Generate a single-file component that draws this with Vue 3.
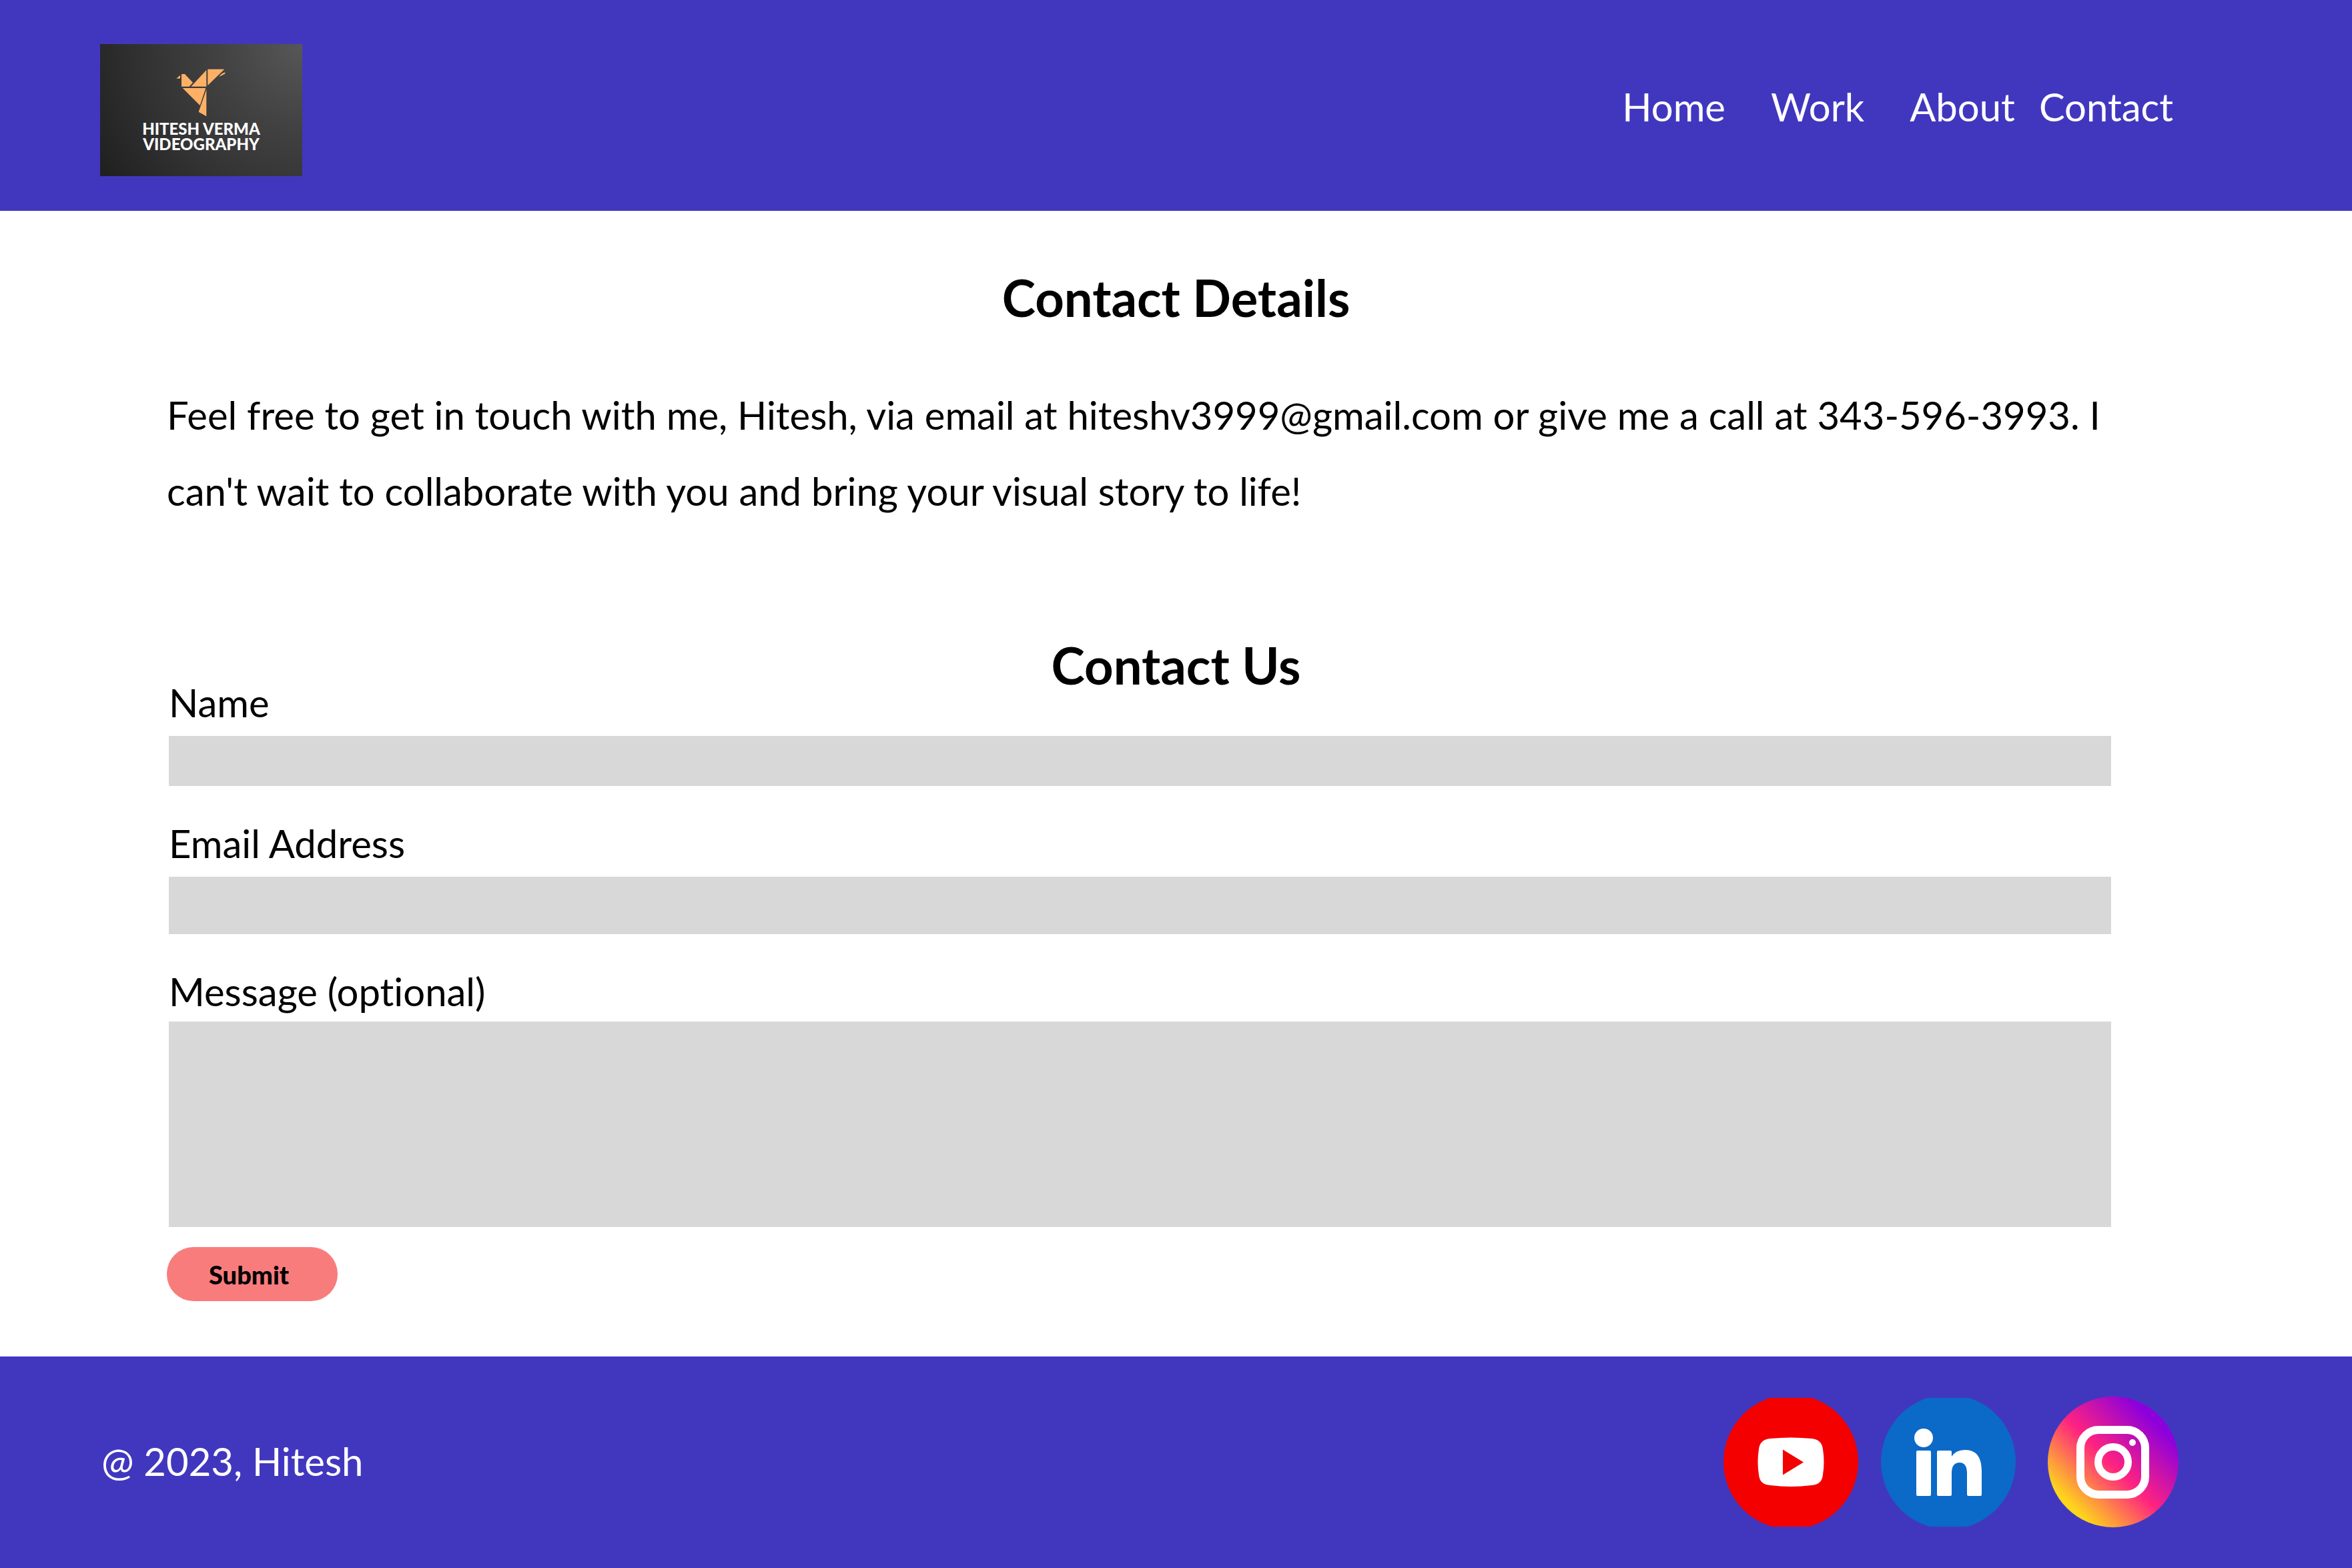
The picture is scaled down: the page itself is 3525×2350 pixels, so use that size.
<script setup>
import { ref } from 'vue'

const links = [
  { label: 'Home', href: '#home', wide: true },
  { label: 'Work', href: '#work', wide: true },
  { label: 'About', href: '#about', wide: false },
  { label: 'Contact', href: '#contact', wide: false },
]

const name = ref('')
const email = ref('')
const message = ref('')
</script>

<template>
  <div class="page">
    <header class="header">
      <a class="logo" href="#home">
        <svg class="bird" viewBox="400 155 231 222" aria-hidden="true">
          <g fill="#feb166">
            <path d="M404 202 421 187V202Z" />
            <path d="M427 182H442L478 220 462 238H427Z" />
            <path d="M470 238 539 164V238Z" />
            <path d="M545 160H620L545 233Z" />
            <path d="M596 194Q606 178 624 174L622 181Z" />
            <path d="M432 245H536L510 323Z" />
            <path d="M539 252V372L504 352Z" />
          </g>
        </svg>
        <span class="brand">HITESH VERMA</span>
        <span class="brand">VIDEOGRAPHY</span>
      </a>
      <nav class="nav">
        <a v-for="l in links" :key="l.label" :href="l.href" :class="{ wide: l.wide }">{{ l.label }}</a>
      </nav>
    </header>

    <main class="main">
      <h1>Contact Details</h1>
      <p class="intro">
        Feel free to get in touch with me, Hitesh, via email at hiteshv3999@gmail.com or give me a call at
        343-596-3993. I can't wait to collaborate with you and bring your visual story to life!
      </p>

      <h2>Contact Us</h2>
      <form class="form" @submit.prevent>
        <div class="field">
          <label for="name">Name</label>
          <input id="name" v-model="name" class="short" type="text" />
        </div>
        <div class="field">
          <label for="email">Email Address</label>
          <input id="email" v-model="email" type="email" />
        </div>
        <div class="field">
          <label for="message">Message (optional)</label>
          <textarea id="message" v-model="message"></textarea>
        </div>
        <button class="submit" type="submit">Submit</button>
      </form>
    </main>

    <footer class="footer">
      <p class="copyright">@ 2023, Hitesh</p>
      <div class="social">
        <a href="#youtube" aria-label="YouTube">
          <svg width="202" height="193" viewBox="0 0 202 193">
            <circle cx="101" cy="96" r="101" fill="#f40000" />
            <path
              fill="#fff"
              d="M70 61Q101 58 132 61C142 62 148 67 149 77Q152 96 149 115C148 126 142 130 132 131Q101 135 70 131C60 130 54 126 53 115Q50 96 53 77C54 67 60 62 70 61Z"
            />
            <path fill="#f40000" d="M89 77.500 120 96.500 89 115.500Z" />
          </svg>
        </a>
        <a href="#linkedin" aria-label="LinkedIn">
          <svg width="202" height="193" viewBox="0 0 202 193">
            <circle cx="101" cy="96" r="101" fill="#0b69c7" />
            <circle cx="64" cy="60" r="14" fill="#fff" />
            <rect x="53" y="79" width="22" height="68" rx="2" fill="#fff" />
            <path
              fill="#fff"
              d="M86 79H104Q106 79 106 81V88Q112 78 126 78C144 78 151 90 151 110V145Q151 147 149 147H131Q129 147 129 145V113C129 102 125 97 118 97C110 97 106 102 106 113V145Q106 147 104 147H86Q84 147 84 145V81Q84 79 86 79Z"
            />
          </svg>
        </a>
        <a class="spaced" href="#instagram" aria-label="Instagram">
          <svg width="196" height="196" viewBox="0 0 196 196">
            <defs>
              <linearGradient id="sunset" gradientUnits="userSpaceOnUse" x1="28" y1="168" x2="168" y2="28">
                <stop offset="0.040" stop-color="#fdd51b" />
                <stop offset="0.480" stop-color="#ff2380" />
                <stop offset="0.940" stop-color="#8c00dc" />
              </linearGradient>
            </defs>
            <circle cx="98" cy="98" r="98" fill="url(#sunset)" />
            <rect x="49" y="50" width="97" height="97" rx="27" fill="none" stroke="#fff" stroke-width="12" />
            <circle cx="98" cy="98" r="22.500" fill="none" stroke="#fff" stroke-width="11" />
            <circle cx="127" cy="69" r="5" fill="#fff" />
          </svg>
        </a>
      </div>
    </footer>
  </div>
</template>

<style>
body {
  margin: 0;
}
</style>

<style scoped>
.page {
  display: flex;
  flex-direction: column;
  min-height: 100vh;
  background: #fff;
  color: #000;
  font-family: Lato, "Noto Sans", sans-serif;
  font-size: 58px;
  font-variant-ligatures: none;
}

h1,
h2,
p {
  margin: 0;
}

a {
  color: inherit;
  text-decoration: none;
}

.header,
.footer {
  display: flex;
  align-items: center;
  justify-content: space-between;
  background: #4137bf;
  color: #fff;
}

.header {
  padding: 66px 268px 52px 150px;
}

.logo {
  box-sizing: border-box;
  display: flex;
  flex-direction: column;
  align-items: center;
  width: 303px;
  height: 198px;
  padding-top: 36px;
  background: radial-gradient(circle at 100% 0, #575757 0, #424142 36%, #333233 66%, #201f20 100%);
}

.bird {
  width: 77px;
  height: 74px;
  margin-bottom: 5px;
}

.brand {
  font-size: 24px;
  font-weight: 900;
  line-height: 23px;
  white-space: nowrap;
}

.nav {
  display: flex;
  gap: 36px;
  padding-bottom: 12px;
}

.nav .wide {
  padding-right: 32px;
}

.main {
  flex: 1;
  padding: 96px 361px 83px 250px;
}

h1,
h2 {
  /* balances the uneven side padding so headings sit mid-page */
  margin-right: -111px;
  font-size: 76px;
  font-weight: 700;
  line-height: 68px;
  text-align: center;
}

.intro {
  margin-top: 85px;
  line-height: 114px;
}

h2 {
  margin-top: 170px;
}

.form {
  display: flex;
  flex-direction: column;
  align-items: flex-start;
}

.field {
  box-sizing: border-box;
  display: flex;
  flex-direction: column;
  gap: 28px;
  width: 100%;
  padding-left: 3px;
}

.field + .field {
  margin-top: 64px;
}

.field:has(textarea) {
  gap: 23px;
}

label {
  line-height: 44px;
}

input,
textarea {
  box-sizing: border-box;
  width: 100%;
  height: 86px;
  margin: 0;
  padding: 0 20px;
  border: 0;
  border-radius: 0;
  background: #d8d8d8;
  color: inherit;
  font: inherit;
}

.short {
  height: 75px;
}

textarea {
  height: 308px;
  resize: none;
}

.submit {
  height: 81px;
  margin-top: 30px;
  padding: 0 73px 0 63px;
  border: 0;
  border-radius: 40px;
  background: #f97c7c;
  color: #000;
  font: inherit;
  font-size: 38px;
  font-weight: 900;
}

.footer {
  padding: 60px 260px 61px 152px;
}

.copyright {
  padding-bottom: 4px;
}

.social {
  display: flex;
  align-items: center;
  gap: 34px;
}

.social a,
.social svg {
  display: block;
}

.spaced {
  margin-left: 14px;
}
</style>
